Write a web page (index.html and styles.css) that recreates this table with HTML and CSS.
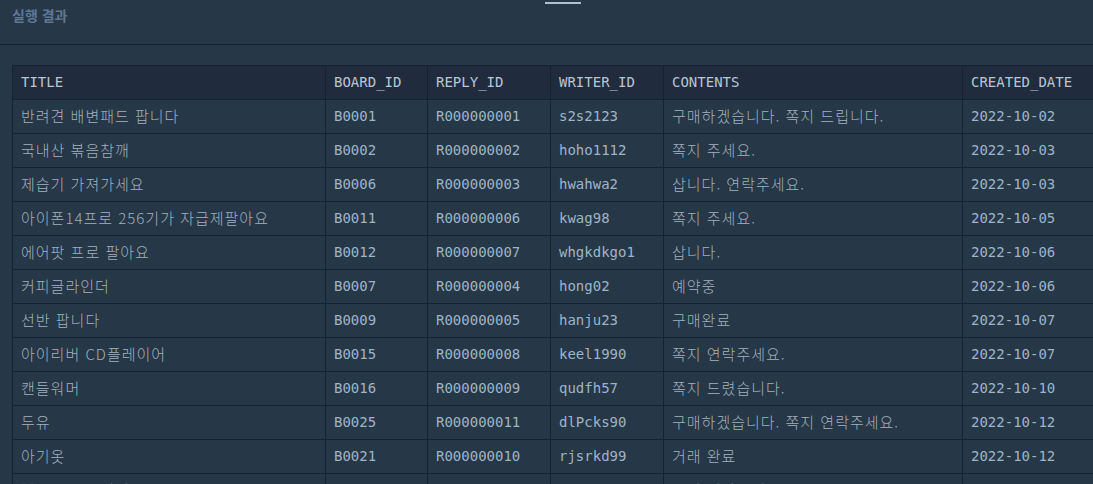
FILE: index.html
```html
<!DOCTYPE html>
<html lang="ko">
<head>
<meta charset="utf-8">
<title>실행 결과</title>
<link rel="stylesheet" href="styles.css">
</head>
<body>
<div class="page">
  <div class="tabbar"><span class="tab-indicator"></span></div>
  <header class="section-head">
    <h2 class="section-title">실행 결과</h2>
  </header>
  <div class="result">
    <table class="grid">
      <colgroup>
        <col class="c-title"><col class="c-board"><col class="c-reply"><col class="c-writer"><col class="c-contents"><col class="c-date">
      </colgroup>
      <thead>
        <tr><th>TITLE</th><th>BOARD_ID</th><th>REPLY_ID</th><th>WRITER_ID</th><th>CONTENTS</th><th>CREATED_DATE</th></tr>
      </thead>
      <tbody>
        <tr><td class="ko">반려견 배변패드 팝니다</td><td>B0001</td><td>R000000001</td><td>s2s2123</td><td class="ko">구매하겠습니다. 쪽지 드립니다.</td><td>2022-10-02</td></tr>
        <tr><td class="ko">국내산 볶음참깨</td><td>B0002</td><td>R000000002</td><td>hoho1112</td><td class="ko">쪽지 주세요.</td><td>2022-10-03</td></tr>
        <tr><td class="ko">제습기 가져가세요</td><td>B0006</td><td>R000000003</td><td>hwahwa2</td><td class="ko">삽니다. 연락주세요.</td><td>2022-10-03</td></tr>
        <tr><td class="ko">아이폰14프로 256기가 자급제팔아요</td><td>B0011</td><td>R000000006</td><td>kwag98</td><td class="ko">쪽지 주세요.</td><td>2022-10-05</td></tr>
        <tr><td class="ko">에어팟 프로 팔아요</td><td>B0012</td><td>R000000007</td><td>whgkdkgo1</td><td class="ko">삽니다.</td><td>2022-10-06</td></tr>
        <tr><td class="ko">커피글라인더</td><td>B0007</td><td>R000000004</td><td>hong02</td><td class="ko">예약중</td><td>2022-10-06</td></tr>
        <tr><td class="ko">선반 팝니다</td><td>B0009</td><td>R000000005</td><td>hanju23</td><td class="ko">구매완료</td><td>2022-10-07</td></tr>
        <tr><td class="ko">아이리버 CD플레이어</td><td>B0015</td><td>R000000008</td><td>keel1990</td><td class="ko">쪽지 연락주세요.</td><td>2022-10-07</td></tr>
        <tr><td class="ko">캔들워머</td><td>B0016</td><td>R000000009</td><td>qudfh57</td><td class="ko">쪽지 드렸습니다.</td><td>2022-10-10</td></tr>
        <tr><td class="ko">두유</td><td>B0025</td><td>R000000011</td><td>dlPcks90</td><td class="ko">구매하겠습니다. 쪽지 연락주세요.</td><td>2022-10-12</td></tr>
        <tr><td class="ko">아기옷</td><td>B0021</td><td>R000000010</td><td>rjsrkd99</td><td class="ko">거래 완료</td><td>2022-10-12</td></tr>
        <tr><td class="ko">블루투스 스피커</td><td>B0028</td><td>R000000012</td><td>sksk777</td><td class="ko">쪽지 연락주세요.</td><td>2022-10-13</td></tr>
      </tbody>
    </table>
  </div>
</div>
</body>
</html>
```

FILE: styles.css
```css
html, body {
  margin: 0;
  padding: 0;
  background: #263747;
  overflow: hidden;
}
body {
  font-family: "DejaVu Sans Mono", "Noto Sans CJK KR", monospace;
  color: #b2c0cc;
}
.page {
  width: 1093px;
  height: 484px;
  overflow: hidden;
  position: relative;
}
.tabbar {
  height: 0;
}
.tab-indicator {
  position: absolute;
  left: 545px;
  top: 2px;
  width: 36px;
  height: 2px;
  background: #b2c0cc;
}
.section-head {
  height: 45px;
  border-bottom: 1px solid #172230;
  box-sizing: border-box;
  padding: 5px 12px 0;
}
.section-title {
  margin: 0;
  font-family: "Noto Sans CJK KR", "Noto Sans", sans-serif;
  font-size: 14px;
  font-weight: 700;
  line-height: 20px;
  color: #5b7895;
}
.result {
  padding: 20px 0 0 12px;
}
.grid {
  border-collapse: collapse;
  table-layout: fixed;
  width: 1120px;
}
.c-title { width: 313px; }
.c-board { width: 102px; }
.c-reply { width: 123px; }
.c-writer { width: 113px; }
.c-contents { width: 299px; }
.c-date { width: 170px; }
.grid th, .grid td {
  border: 1px solid #172230;
  padding: 0 8px;
  height: 34px;
  box-sizing: border-box;
  text-align: left;
  font-size: 14px;
  line-height: 17px;
  white-space: nowrap;
  overflow: hidden;
  font-weight: 400;
}
.grid th {
  background: #202b3d;
  color: #b9c6d2;
}
.grid td {
  color: #9fb4c9;
}
.grid td.ko {
  font-family: "Noto Sans CJK KR", sans-serif;
  font-size: 15px;
  letter-spacing: 1px;
  color: #a5b0bb;
  font-weight: 300;
  padding-bottom: 2px;
}
```
